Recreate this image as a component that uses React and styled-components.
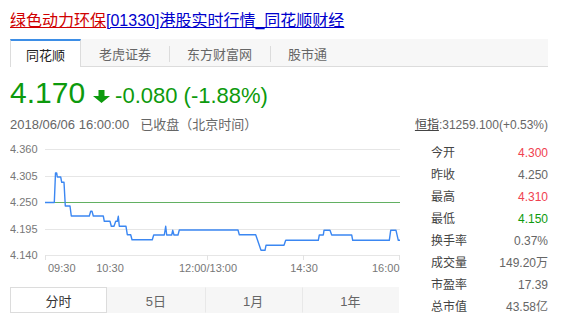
import styled, { createGlobalStyle } from "styled-components";

const GlobalStyle = createGlobalStyle`
    body {
        margin: 0;
        background: #fff;
        font-family: "Liberation Sans", Arial, "Noto Sans CJK SC", sans-serif;
    }
`;

const GREEN = "#0d9a0d";
const RED = "#f0414f";

// price line, traced in page pixels (x 45..400, y 146..252)
const linePoints = [
    [45, 199.5], [54.3, 199.5], [55.5, 170], [56.7, 170], [57.3, 174], [60.7, 174],
    [61.7, 179.3], [64, 179.3], [65.3, 203], [70, 203], [71.3, 213], [89.3, 213],
    [90.7, 208.3], [92, 208.3], [93.3, 213], [103.3, 213], [104.3, 218.3], [110, 218.3],
    [111.3, 223.3], [114, 223.3], [115.7, 218.3], [117.3, 218.3], [118.3, 213.3],
    [119.3, 223.3], [126, 223.3], [127.3, 231.7], [130.7, 231.7], [132, 236.7],
    [152.3, 236.7], [153.7, 232], [164.3, 232], [165.7, 223.3], [166.7, 232],
    [171.7, 232], [172.7, 227.3], [174, 232], [178, 232], [179.3, 227], [238, 227],
    [239.3, 231.7], [255.7, 231.7], [261, 247.3], [265, 247.3], [266, 242.3],
    [284, 242.3], [285.7, 237.3], [318.3, 237.3], [319.3, 232], [323.3, 232],
    [324, 227.3], [330, 227.3], [331.7, 232], [351.7, 232], [352.7, 237.3],
    [389.3, 237.3], [390.7, 227.3], [396, 227.3], [398.3, 237.3], [400, 237.3],
];

const yTicks = [
    { label: "4.360", y: 146.5, color: "#e6e6e6" },
    { label: "4.305", y: 173.5, color: "#e6e6e6" },
    { label: "4.250", y: 199.5, color: "#62b062" },
    { label: "4.195", y: 226.5, color: "#e6e6e6" },
    { label: "4.140", y: 252.5, color: "#e6e6e6" },
];

const timeLabels = [
    { text: "09:30", x: 48, anchor: "start" },
    { text: "10:30", x: 110, anchor: "middle" },
    { text: "12:00/13:00", x: 208, anchor: "middle" },
    { text: "14:30", x: 304, anchor: "middle" },
    { text: "16:00", x: 399.5, anchor: "end" },
];

const stats = [
    { label: "今开", value: "4.300", color: RED },
    { label: "昨收", value: "4.250" },
    { label: "最高", value: "4.310", color: RED },
    { label: "最低", value: "4.150", color: GREEN },
    { label: "换手率", value: "0.37%" },
    { label: "成交量", value: "149.20万" },
    { label: "市盈率", value: "17.39" },
    { label: "总市值", value: "43.58亿" },
];

const tabs = ["同花顺", "老虎证券", "东方财富网", "股市通"];
const ranges = ["分时", "5日", "1月", "1年"];

function PriceChart() {
    return (
        <ChartSvg width="390" height="146" viewBox="10 138 390 146">
            {yTicks.map((t) => (
                <g key={t.label}>
                    <line x1="45" x2="400" y1={t.y} y2={t.y} stroke={t.color} strokeWidth="1" />
                    <text x="10" y={t.y + 3.5} fontSize="11" fill="#777">
                        {t.label}
                    </text>
                </g>
            ))}
            {[45.5, 207.5, 303.5, 399.5].map((x) => (
                <line key={x} x1={x} x2={x} y1="252" y2="257" stroke="#e2e2e2" strokeWidth="1" />
            ))}
            {timeLabels.map((t) => (
                <text key={t.text} x={t.x} y="268.5" fontSize="11" fill="#777" textAnchor={t.anchor}>
                    {t.text}
                </text>
            ))}
            <polyline
                points={linePoints.map((p) => p.join(",")).join(" ")}
                fill="none"
                stroke="#3b87f2"
                strokeWidth="1.4"
                strokeLinejoin="round"
            />
        </ChartSvg>
    );
}

function DownArrow() {
    return (
        <Arrow width="17" height="13" viewBox="0 0 17 13">
            <path d="M5.5 0h6v6h5.5l-8.5 7-8.5-7h5.5z" fill={GREEN} />
        </Arrow>
    );
}

export default function App() {
    return (
        <Page>
            <GlobalStyle />
            <Title>
                <RedLink>绿色动力环保</RedLink>
                <BlueLink>[01330]港股实时行情_同花顺财经</BlueLink>
            </Title>
            <TabBar>
                {tabs.map((t, i) => (
                    <Tab key={t} $active={i === 0} $sep={i > 1}>
                        {t}
                    </Tab>
                ))}
            </TabBar>
            <PriceRow>
                <Price>4.170</Price>
                <DownArrow />
                <Change>-0.080 (-1.88%)</Change>
            </PriceRow>
            <DateRow>
                <span>
                    2018/06/06 16:00:00<Closed>已收盘（北京时间）</Closed>
                </span>
                <IndexText>
                    <IndexName>恒指</IndexName>:31259.100(+0.53%)
                </IndexText>
            </DateRow>
            <Main>
                <ChartColumn>
                    <PriceChart />
                    <RangeBar>
                        {ranges.map((r, i) => (
                            <RangeTab key={r} $active={i === 0} $sep={i > 1}>
                                {r}
                            </RangeTab>
                        ))}
                    </RangeBar>
                </ChartColumn>
                <StatList>
                    {stats.map((s) => (
                        <StatRow key={s.label}>
                            <StatLabel>{s.label}</StatLabel>
                            <StatValue $color={s.color}>{s.value}</StatValue>
                        </StatRow>
                    ))}
                </StatList>
            </Main>
        </Page>
    );
}

const Page = styled.div`
    width: 565px;
    box-sizing: border-box;
    padding: 0 17px 0 10px;
`;

const Title = styled.div`
    padding-top: 11px;
    font-size: 16px;
    line-height: 20px;
    white-space: nowrap;
`;

const RedLink = styled.a`
    color: #d00000;
    text-decoration: underline;
`;

const BlueLink = styled.a`
    color: #0000cc;
    text-decoration: underline;
`;

const TabBar = styled.div`
    display: flex;
    margin-top: 8px;
    height: 27px;
    background: #f7f7f7;
    border-bottom: 1px solid #dcdcdc;
`;

const Tab = styled.div`
    position: relative;
    display: flex;
    align-items: center;
    padding: 0 ${(p) => (p.$active ? "15px" : "17px")};
    font-size: 13px;
    color: ${(p) => (p.$active ? "#222" : "#666")};
    background: ${(p) => (p.$active ? "#fff" : "transparent")};
    border-top: 2px solid ${(p) => (p.$active ? "#3d8ee6" : "transparent")};
    border-left: 1px solid ${(p) => (p.$active ? "#dcdcdc" : "transparent")};
    border-right: 1px solid ${(p) => (p.$active ? "#dcdcdc" : "transparent")};
    margin-bottom: ${(p) => (p.$active ? "-1px" : "0")};
    box-sizing: border-box;

    &::before {
        content: "";
        display: ${(p) => (p.$sep ? "block" : "none")};
        position: absolute;
        left: -1px;
        top: 5px;
        height: 16px;
        border-left: 1px solid #dcdcdc;
    }
`;

const PriceRow = styled.div`
    display: flex;
    align-items: baseline;
    margin-top: 9px;
    color: ${GREEN};
`;

const Price = styled.span`
    font-size: 30px;
    line-height: 34px;
`;

const Arrow = styled.svg`
    margin-left: 8px;
    margin-bottom: 1px;
`;

const Change = styled.span`
    margin-left: 5px;
    font-size: 22px;
    line-height: 34px;
`;

const DateRow = styled.div`
    display: flex;
    justify-content: space-between;
    align-items: baseline;
    margin-top: 4px;
    font-size: 13px;
    line-height: 16px;
    color: #666;
`;

const Closed = styled.span`
    margin-left: 11px;
`;

const IndexText = styled.span`
    font-size: 12px;
    color: #666;
`;

const IndexName = styled.span`
    text-decoration: underline;
    color: #444;
`;

const Main = styled.div`
    display: flex;
    justify-content: space-between;
    margin-top: 8px;
`;

const ChartColumn = styled.div`
    width: 390px;
`;

const ChartSvg = styled.svg`
    display: block;
    font-family: "Liberation Sans", Arial, sans-serif;
`;

const RangeBar = styled.div`
    display: grid;
    grid-template-columns: repeat(4, 1fr);
    width: 389px;
    height: 26px;
    background: #f6f6f6;
`;

const RangeTab = styled.div`
    display: flex;
    align-items: center;
    justify-content: center;
    font-size: 13px;
    box-sizing: border-box;
    color: ${(p) => (p.$active ? "#333" : "#666")};
    background: ${(p) => (p.$active ? "#fff" : "transparent")};
    border: 1px solid ${(p) => (p.$active ? "#dcdcdc" : "transparent")};
    border-left-color: ${(p) => (p.$active ? "#dcdcdc" : p.$sep ? "#e8e8e8" : "transparent")};
`;

const StatList = styled.div`
    width: 117px;
    padding-top: 1px;
`;

const StatRow = styled.div`
    display: flex;
    justify-content: space-between;
    font-size: 12px;
    line-height: 22px;
`;

const StatLabel = styled.span`
    color: #444;
`;

const StatValue = styled.span`
    color: ${(p) => p.$color || "#666"};
`;
